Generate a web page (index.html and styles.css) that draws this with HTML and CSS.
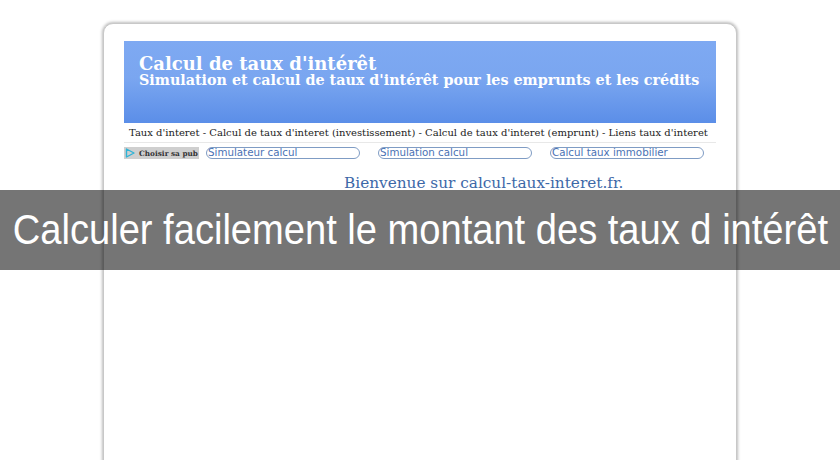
FILE: index.html
```html
<!DOCTYPE html>
<html lang="fr">
<head>
<meta charset="utf-8">
<title>Calcul de taux d'intérêt</title>
<link rel="stylesheet" href="styles.css">
</head>
<body>
<div class="page">
  <div class="card">
    <div class="header">
      <div class="title">Calcul de taux d'intérêt</div>
      <div class="subtitle">Simulation et calcul de taux d'intérêt pour les emprunts et les crédits</div>
    </div>
    <div class="nav">Taux d'interet - Calcul de taux d'interet (investissement) - Calcul de taux d'interet (emprunt) - Liens taux d'interet</div>
    <div class="links">
      <span class="pub"><svg class="play" width="10" height="10" viewBox="0 0 10 10"><path d="M1.5 1 L9 5 L1.5 9 Z" fill="none" stroke="#2fb3d6" stroke-width="1.4" stroke-linejoin="round"/></svg>Choisir sa pub</span>
      <span class="pill">Simulateur calcul</span>
      <span class="pill">Simulation calcul</span>
      <span class="pill">Calcul taux immobilier</span>
    </div>
    <div class="welcome">Bienvenue sur calcul-taux-interet.fr.</div>
  </div>
  <div class="banner"><span class="banner-text">Calculer facilement le montant des taux d intérêt</span></div>
</div>
</body>
</html>
```
FILE: styles.css
```css
html, body {
  margin: 0;
  padding: 0;
  background: #ffffff;
  overflow: hidden;
}
.page {
  position: relative;
  width: 840px;
  height: 460px;
  overflow: hidden;
}
.card {
  margin: 23px 0 0 103px;
  width: 592px;
  height: 460px;
  padding: 17px 20px 0 20px;
  border: 1px solid #c8c8c8;
  border-radius: 10px;
  box-shadow: 0 0 3px 1px #bdbdbd;
  background: #fff;
}
.header {
  height: 82px;
  background: linear-gradient(#7ea9f2 0%, #7aa6f0 45%, #5b8ee8 100%);
  padding: 14px 0 0 15px;
  box-sizing: border-box;
  color: #ffffff;
  font-family: "DejaVu Serif", serif;
  font-weight: bold;
}
.title {
  font-size: 18px;
  line-height: 18px;
}
.subtitle {
  font-size: 14.3px;
  line-height: 15px;
}
.nav {
  font-family: "DejaVu Serif", serif;
  font-size: 10px;
  color: #222;
  padding: 4px 0 3px 5px;
  line-height: 12px;
  border-bottom: 1px solid #e8e8e8;
  white-space: nowrap;
}
.links {
  display: flex;
  align-items: center;
  margin-top: 4px;
  height: 12px;
}
.pub {
  flex: none;
  display: flex;
  align-items: center;
  width: 75px;
  height: 12px;
  background: #cfcfcf;
  font-family: "DejaVu Serif", serif;
  font-size: 7.3px;
  font-weight: bold;
  color: #333;
  box-sizing: border-box;
  padding-left: 1px;
  margin-right: 7px;
  white-space: nowrap;
}
.play {
  margin-right: 4px;
}
.pill {
  flex: none;
  width: 154px;
  height: 12px;
  box-sizing: border-box;
  border: 1px solid #7f9cc4;
  border-radius: 7px;
  font-family: "DejaVu Sans", sans-serif;
  font-size: 10.3px;
  line-height: 9px;
  color: #4a72b4;
  padding-left: 1px;
  margin-right: 18px;
  white-space: nowrap;
}
.pill:last-child {
  margin-right: 0;
}
.welcome {
  margin-top: 16px;
  padding-left: 220px;
  font-family: "DejaVu Serif", serif;
  font-size: 15.3px;
  color: #3d68a8;
  line-height: 16px;
  white-space: nowrap;
}
.banner {
  position: absolute;
  left: 0;
  top: 190px;
  width: 840px;
  height: 80px;
  background: rgba(0, 0, 0, 0.54);
  display: flex;
  align-items: center;
  justify-content: center;
}
.banner-text {
  display: inline-block;
  color: #ffffff;
  font-family: "Liberation Sans", Arial, sans-serif;
  font-size: 42px;
  line-height: 42px;
  white-space: nowrap;
  transform: scaleX(0.907);
}
```
